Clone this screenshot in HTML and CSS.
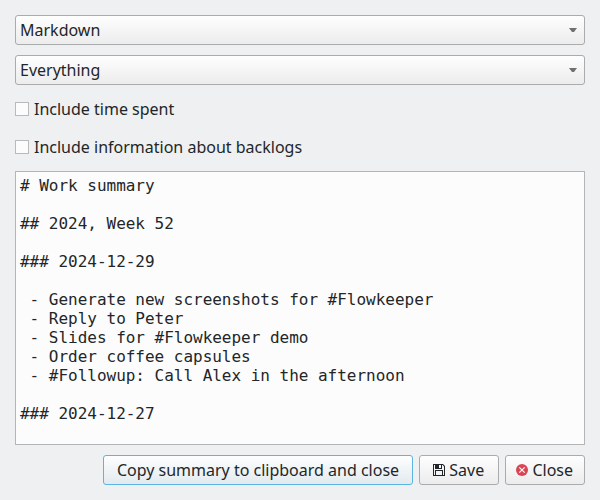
FILE: index.html
```
<!DOCTYPE html>
<html lang="en">
<head>
<meta charset="utf-8">
<title>Work summary</title>
<link rel="stylesheet" href="styles.css">
</head>
<body>
<main class="dialog">
  <div class="combo"><span>Markdown</span><svg class="arrow" viewBox="0 0 8 4"><path d="M0 0h8L5 4H3z" fill="#6e7071"/></svg></div>
  <div class="combo"><span>Everything</span><svg class="arrow" viewBox="0 0 8 4"><path d="M0 0h8L5 4H3z" fill="#6e7071"/></svg></div>
  <div class="check"><i class="box"></i><span>Include time spent</span></div>
  <div class="check"><i class="box"></i><span>Include information about backlogs</span></div>
  <pre class="summary"># Work summary

## 2024, Week 52

### 2024-12-29

 - Generate new screenshots for #Flowkeeper
 - Reply to Peter
 - Slides for #Flowkeeper demo
 - Order coffee capsules
 - #Followup: Call Alex in the afternoon

### 2024-12-27
</pre>
  <footer class="actions">
    <button class="btn copy">Copy summary to clipboard and close</button>
    <button class="btn"><svg class="icon" viewBox="0 0 16 16"><path fill="#232629" fill-rule="evenodd" d="M2 2h10l2 2v10H2zM3 3v10h1V8h8v5h1V4.4L11.6 3H11v4H4V3zM8 3v3h2V3zM5 9v4h6V9z"/></svg><span>Save</span></button>
    <button class="btn"><svg class="icon" viewBox="0 0 16 16"><circle cx="8" cy="8" r="6" fill="#da4453"/><path d="M5.3 5.3l5.4 5.4m0-5.4l-5.4 5.4" stroke="#fcfcfc" stroke-width="1.2"/></svg><span>Close</span></button>
  </footer>
</main>
</body>
</html>
```
FILE: styles.css
```
* { box-sizing: border-box; }
body { margin: 0; background: #eff0f1; color: #232629; font: 16px/22px "Noto Sans", sans-serif; }
.dialog { width: 600px; height: 500px; padding: 15px; display: flex; flex-direction: column; }
.combo { height: 30px; margin-bottom: 10px; padding: 0 7px 0 4px; display: flex; align-items: center; justify-content: space-between; border: 1px solid #a9abac; border-radius: 3px; background: linear-gradient(#fefefe, #ececec); }
.arrow { width: 8px; height: 4px; }
.check { height: 28px; margin-bottom: 10px; display: flex; align-items: center; gap: 5px; }
.box { width: 14px; height: 14px; border: 1px solid #b8babb; background: #fcfcfc; }
.summary { height: 274px; margin: 0; padding: 4px; overflow: hidden; border: 1px solid #b3b5b6; background: #fcfcfc; font: 16px/19px "DejaVu Sans Mono", monospace; letter-spacing: -0.02px; }
.actions { display: flex; justify-content: flex-end; gap: 6px; margin-top: 10px; }
.btn { width: 80px; height: 30px; padding: 0 3px 0 0; display: flex; align-items: center; justify-content: center; gap: 2.5px; border: 1px solid #a9abac; border-radius: 3px; background: linear-gradient(#fefefe, #ececec); color: inherit; font: inherit; }
.copy { width: 310px; padding: 0; border-color: #5bb5e2; background: linear-gradient(#fefefe, #e2eaee); }
.icon { width: 16px; height: 16px; }
```
